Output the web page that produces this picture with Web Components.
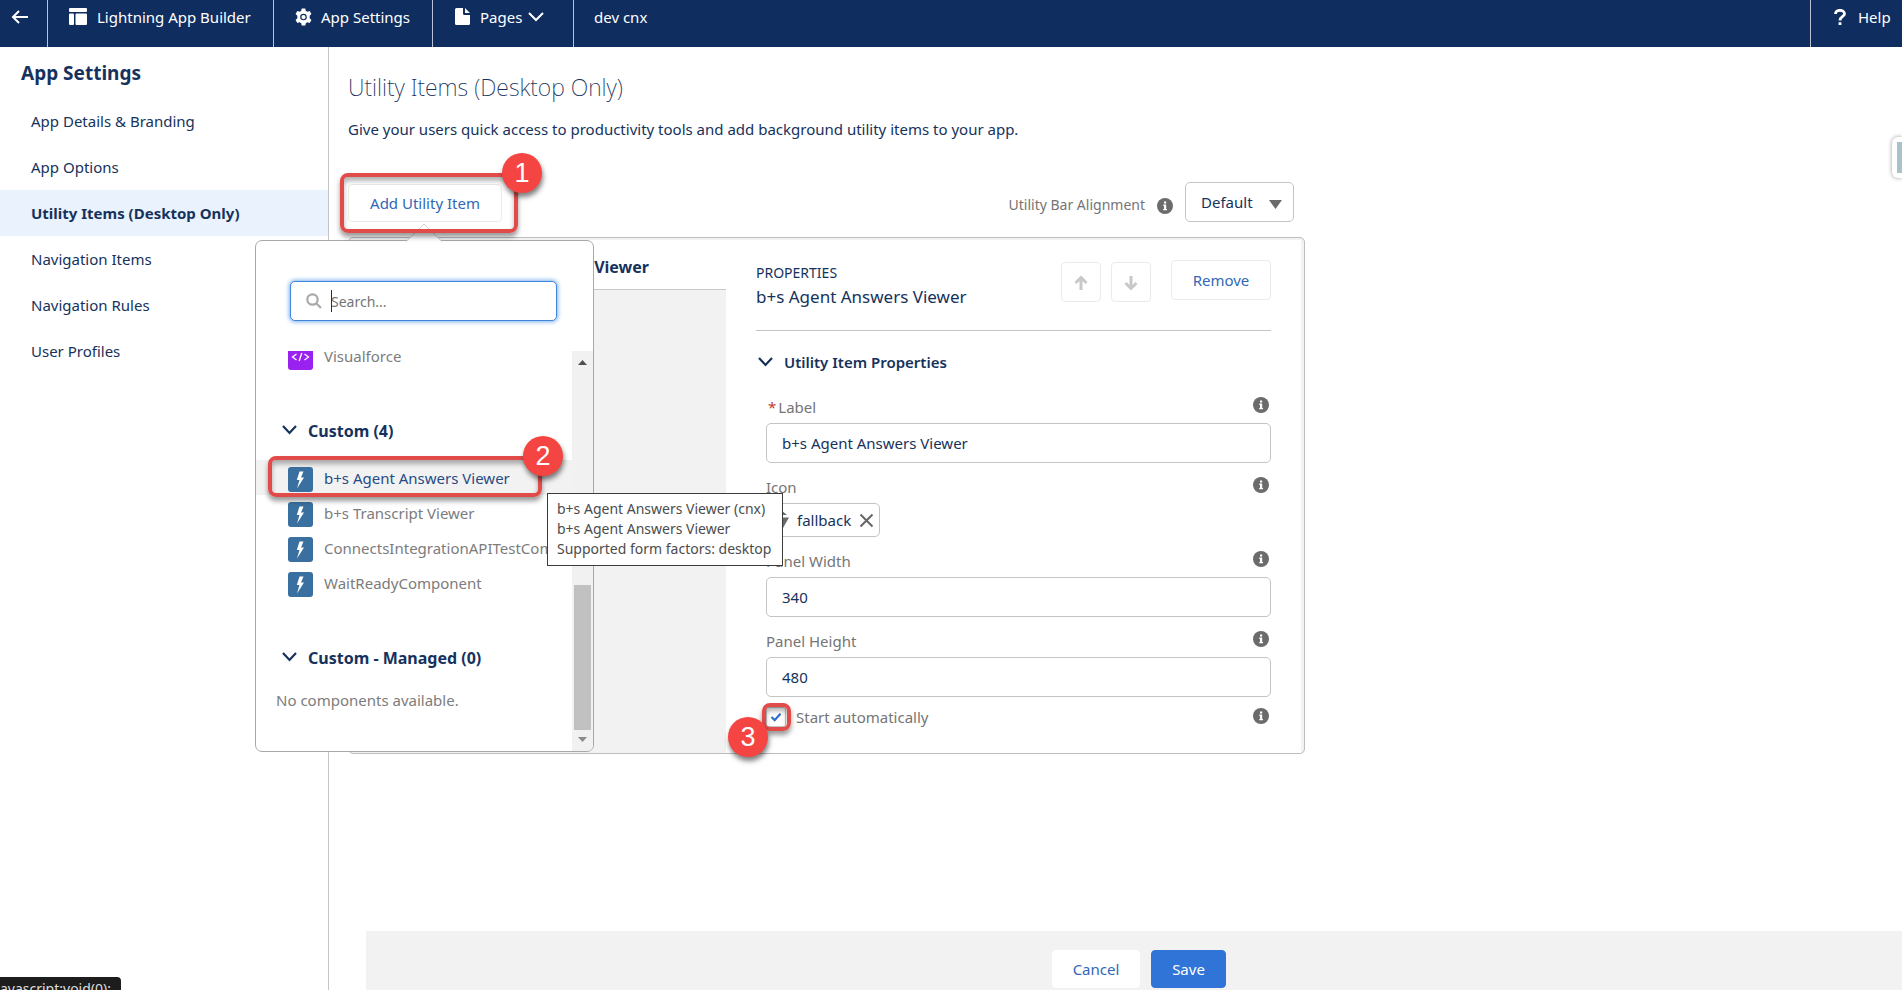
<!DOCTYPE html>
<html lang="en">
<head>
<meta charset="utf-8">
<title>Lightning App Builder</title>
<style>
  html, body { margin: 0; height: 100%; }
  body {
    font-family: "Noto Sans", "Open Sans", sans-serif;
    font-size: 15px; line-height: 24px; color: #16325c; background: #fff; overflow: hidden;
  }
</style>
</head>
<body>
<builder-app></builder-app>

<template id="t-app">
  <style>
    :host { display: grid; grid-template: 47px minmax(0, 1fr) / 329px minmax(0, 1fr); min-height: 100vh; position: relative; overflow: hidden; }
    app-header { grid-column: 1 / -1; }
    .side-tab { position: absolute; right: 0; top: 137px; width: 5px; height: 31px; padding: 5px 0 5px 5px; background: #fff; border-radius: 6px 0 0 6px; box-shadow: 0 0 4px rgba(0,0,0,.4); }
    .side-tab i { display: block; height: 100%; background: #a9c2c9; }
    .status { position: absolute; left: 0; bottom: 0; width: 111px; height: 13px; padding-right: 10px; display: flex; justify-content: flex-end; overflow: hidden; white-space: nowrap; background: #1d1d1d; color: #ddd; font-size: 14px; line-height: 24px; border-radius: 0 4px 0 0; }
  </style>
  <app-header></app-header>
  <settings-nav></settings-nav>
  <utility-page></utility-page>
  <div class="side-tab"><i></i></div>
  <div class="status">javascript:void(0);</div>
</template>

<template id="t-header">
  <style>
    :host { display: grid; grid-template-columns: 48px 226px 159px 141px 1fr 92px; background: #102d5f; color: #fff; line-height: 32px; }
    a, button, span { all: unset; box-sizing: border-box; display: flex; align-items: center; height: 47px; padding-bottom: 14px; border-right: 1px solid #b9c3d3; white-space: nowrap; cursor: pointer; }
    span { border-right: 0; padding-left: 20px; cursor: default; }
    a:last-child { border-right: 0; border-left: 1px solid #b9c3d3; padding-left: 23px; gap: 12px; }
    .back { padding-left: 11px; }
    .b { padding-left: 21px; gap: 10px; }
    .g { padding-left: 21px; gap: 9px; }
    .p { padding-left: 22px; gap: 10px; }
    .p .chev { margin-left: -4px; }
    svg { flex: none; }
  </style>
  <a class="back" href="#back" aria-label="Back"><svg width="18" height="14" viewBox="0 0 18 14" fill="none" stroke="#fff" stroke-width="2"><path d="M17 7H2M8 1L2 7l6 6"/></svg></a>
  <a class="b" href="#builder"><svg width="18" height="17" viewBox="0 0 18 17" fill="#fff"><rect width="18" height="4" rx="1"/><rect y="5.500" width="5" height="11.500" rx="1"/><rect x="6.500" y="5.500" width="11.500" height="11.500" rx="1"/></svg>Lightning App Builder</a>
  <a class="g" href="#settings"><svg width="17" height="18" viewBox="0 0 24 24"><path fill="#fff" fill-rule="evenodd" d="M9.500 0h5l.7 3.300 2.300 1.300 3.200-1 2.500 4.300-2.500 2.300v3.600l2.500 2.300-2.500 4.300-3.200-1-2.300 1.300-.7 3.300h-5l-.7-3.300-2.300-1.300-3.200 1L.8 16.100l2.500-2.300v-3.600L.8 7.900l2.500-4.300 3.200 1 2.300-1.300zM12 7.300a4.700 4.700 0 100 9.400 4.700 4.700 0 000-9.400z"/><circle cx="12" cy="12" r="3" fill="#fff"/></svg>App Settings</a>
  <button class="p" type="button"><svg width="15" height="17" viewBox="0 0 15 17" fill="#fff"><path d="M1.500 0H8v5.500A1.500 1.500 0 009.500 7H15v8.500a1.500 1.500 0 01-1.500 1.500h-12A1.500 1.500 0 010 15.500v-14A1.500 1.500 0 011.500 0zM10 0l5 5h-5z"/></svg>Pages<svg class="chev" width="16" height="10" viewBox="0 0 16 10" fill="none" stroke="#fff" stroke-width="2"><path d="M1 1l7 7 7-7"/></svg></button>
  <span>dev cnx</span>
  <a href="#help"><svg width="12" height="16" viewBox="0 0 12 16" fill="none" stroke="#fff" stroke-width="2.800"><path d="M1.500 5C1.500 2.500 3.500 1.300 6 1.300s4.500 1.400 4.500 3.600C10.500 7.500 6 7.500 6 11.500M6 13.300V16"/></svg>Help</a>
</template>

<template id="t-nav">
  <style>
    :host { display: block; border-right: 1px solid #c4c4c4; padding-top: 13px; }
    h2 { margin: 0 0 12px; padding-left: 21px; font-size: 19px; line-height: 26px; font-weight: 700; }
    a { display: block; padding-left: 31px; line-height: 46px; color: inherit; text-decoration: none; }
    a[aria-current] { background: #eaf2fd; font-weight: 700; }
  </style>
  <h2>App Settings</h2>
  <nav>
    <a href="#details">App Details &amp; Branding</a>
    <a href="#options">App Options</a>
    <a href="#utility" aria-current="page">Utility Items (Desktop Only)</a>
    <a href="#items">Navigation Items</a>
    <a href="#rules">Navigation Rules</a>
    <a href="#profiles">User Profiles</a>
  </nav>
</template>

<template id="t-page">
  <style>
    :host { display: flex; flex-direction: column; min-width: 0; }
    .content { padding: 24px 19px 0; max-width: 957px; }
    h1 { margin: 0; font-size: 23px; line-height: 32px; font-weight: 200; }
    p { margin: 14px 0 41px; }
    .bar { display: flex; align-items: flex-end; height: 40px; margin-bottom: 15px; padding-right: 11px; }
    .add { position: relative; z-index: 2; margin-right: auto; }
    .btn { box-sizing: border-box; height: 38px; padding: 0; width: 154px; font: inherit; color: #3068b5; background: #fff; border: 1px solid #ebebeb; border-radius: 4px; cursor: pointer; }
    utility-picker { position: absolute; left: -93px; top: 56px; z-index: 1; }
    .one { position: absolute; inset: -11px -16px -11px -8px; z-index: 2; pointer-events: none; --x: 162px; --y: -20px; }
    .bar label { font-size: 14px; line-height: 34px; color: #757575; margin-right: 12px; align-self: flex-end; }
    .bar info-dot { margin: 0 12px 8px 0; }
    .select { position: relative; width: 109px; height: 40px; }
    select { appearance: none; box-sizing: border-box; width: 100%; height: 100%; padding: 0 30px 0 15px; font: inherit; color: #16325c; background: #fff; border: 1px solid #c4c4c4; border-radius: 5px; }
    .select svg { position: absolute; right: 12px; top: 18px; pointer-events: none; }
    .panel { display: grid; grid-template-columns: 377px minmax(0, 1fr); border: 1px solid #bdbdbd; border-radius: 5px; background: #f2f2f2; padding: 2px 3px 0 0; }
    .tab { height: 49px; background: #fff; border-bottom: 1px solid #c9c9c9; text-align: right; padding-right: 77px; font-size: 16px; line-height: 54px; font-weight: 700; }
    footer { margin: auto 0 0 37px; height: 40px; padding: 19px 0 0 10px; background: #f2f2f2; display: flex; justify-content: center; gap: 11px; }
    .cancel { width: 88px; border-color: #fff; }
    .save { width: 75px; background: #2f74d6; border-color: #2f74d6; color: #fff; }
    footer .btn { height: 38px; }
  </style>
  <div class="content">
    <h1>Utility Items (Desktop Only)</h1>
    <p>Give your users quick access to productivity tools and add background utility items to your app.</p>
    <div class="bar">
      <div class="add">
        <button class="btn" type="button">Add Utility Item</button>
        <utility-picker></utility-picker>
        <step-callout class="one">1</step-callout>
      </div>
      <label for="align">Utility Bar Alignment</label>
      <info-dot></info-dot>
      <div class="select">
        <select id="align"><option>Default</option><option>Mirrored</option></select>
        <svg width="13" height="9" viewBox="0 0 13 9"><path fill="#6b6b6b" d="M0 0h13L6.500 9z"/></svg>
      </div>
    </div>
    <div class="panel">
      <div><div class="tab">b+s Agent Answers Viewer</div></div>
      <item-properties></item-properties>
    </div>
  </div>
  <footer>
    <button class="btn cancel" type="button">Cancel</button>
    <button class="btn save" type="button">Save</button>
  </footer>
</template>

<template id="t-props">
  <style>
    :host { display: block; background: #fff; padding: 20px 30px 26px 30px; }
    header { display: flex; align-items: flex-start; height: 70px; border-bottom: 1px solid #c4c4c4; }
    .title { margin-right: auto; padding-top: 3px; }
    .title small { display: block; font-size: 14px; line-height: 20px; }
    .title b { display: block; font-size: 17px; line-height: 28px; font-weight: 400; }
    button { box-sizing: border-box; border: 1px solid #ebebeb; border-radius: 4px; background: #fff; height: 40px; padding: 0; font: inherit; color: #3068b5; }
    .arrow { width: 40px; margin: 2px 10px 0 0; }
    .remove { width: 100px; margin-left: 10px; }
    .arrow svg { display: block; margin: 2px auto 0; }
    h3 { display: flex; align-items: center; gap: 11px; margin: 19px 0 22px; padding-left: 2px; font-size: 15px; line-height: 24px; font-weight: 600; }
    .fields { display: grid; gap: 13px; padding-left: 10px; }
    .pill-row { display: grid; gap: 5px; }
    .line { display: flex; justify-content: space-between; align-items: flex-start; line-height: 22px; color: #757575; padding-right: 2px; }
    .line info-dot { margin-top: 1px; }
    .pill { box-sizing: border-box; display: flex; align-items: center; width: 114px; height: 34px; padding-left: 6px; border: 1px solid #c4c4c4; border-radius: 5px; }
    .pill span { margin: 0 8px; }
    .pill button { width: 16px; height: 16px; border: 0; background: none; }
    .pill svg { display: block; flex: none; }
    .check { margin-top: -3px; line-height: 20px; }
    .check > div { display: flex; position: relative; }
    .check label { padding-left: 10px; }
    input { appearance: none; box-sizing: border-box; width: 20px; height: 20px; margin: 0; border: 1px solid #c4c4c4; border-radius: 2px;
      background: #fff url("data:image/svg+xml,%3Csvg xmlns='http://www.w3.org/2000/svg' viewBox='0 0 20 20'%3E%3Cpath d='M5 10l3.500 3.500L15 6.500' fill='none' stroke='%232f6fca' stroke-width='2.500'/%3E%3C/svg%3E") center/18px; }
    step-callout { position: absolute; left: -4px; top: -4px; width: 29px; height: 28px; --x: -34px; --y: 14px; pointer-events: none; }
  </style>
  <header>
    <div class="title"><small>PROPERTIES</small><b>b+s Agent Answers Viewer</b></div>
    <button class="arrow" type="button" aria-label="Move up" disabled><svg width="14" height="16" viewBox="0 0 14 16" fill="none" stroke="#c8c8c8" stroke-width="3"><path d="M7 15V3M1.500 8L7 2.500 12.500 8"/></svg></button>
    <button class="arrow" type="button" aria-label="Move down" disabled><svg width="14" height="16" viewBox="0 0 14 16" fill="none" stroke="#c8c8c8" stroke-width="3"><path d="M7 1v12M1.500 8L7 13.500 12.500 8"/></svg></button>
    <button class="remove" type="button">Remove</button>
  </header>
  <h3><svg width="15" height="10" viewBox="0 0 15 10" fill="none" stroke="#16325c" stroke-width="2.200"><path d="M1 1l6.500 7L14 1"/></svg>Utility Item Properties</h3>
  <div class="fields">
    <prop-field label="Label" value="b+s Agent Answers Viewer" required></prop-field>
    <div class="pill-row">
      <div class="line">Icon<info-dot></info-dot></div>
      <div class="pill">
        <svg width="16" height="20" viewBox="0 0 16 20" fill="#6b6b6b"><path d="M8 0l6 5H2zM1 7.500h15L10 18H6z"/></svg>
        <span>fallback</span>
        <button type="button" aria-label="Remove icon"><svg width="15" height="15" viewBox="0 0 15 15" stroke="#666" stroke-width="2"><path d="M1.500 1.500l12 12M13.500 1.500l-12 12"/></svg></button>
      </div>
    </div>
    <prop-field label="Panel Width" value="340"></prop-field>
    <prop-field label="Panel Height" value="480"></prop-field>
    <div class="line check">
      <div><input type="checkbox" id="auto" checked><label for="auto">Start automatically</label><step-callout>3</step-callout></div>
      <info-dot></info-dot>
    </div>
  </div>
</template>

<template id="t-field">
  <style>
    :host { display: grid; gap: 5px; }
    .line { display: flex; justify-content: space-between; align-items: flex-start; line-height: 22px; color: #757575; padding-right: 2px; }
    .line info-dot { margin-top: 1px; }
    .req { color: #c23934; padding: 0 2px; }
    input { box-sizing: border-box; width: 100%; height: 40px; padding: 0 15px; font: inherit; color: #16325c; background: #fff; border: 1px solid #c4c4c4; border-radius: 5px; }
  </style>
  <div class="line"><label for="f"></label><info-dot></info-dot></div>
  <input id="f" type="text">
</template>

<template id="t-picker">
  <style>
    :host { display: block; box-sizing: border-box; width: 339px; height: 512px; background: #fff; border: 1px solid #a8a8a8; border-radius: 7px; }
    .nub { position: absolute; left: 150px; top: -18px; }
    .search { position: relative; margin: 40px 35px 30px 34px; }
    input { display: block; box-sizing: border-box; width: 267px; height: 40px; padding: 0 12px 0 40px; font: inherit; font-size: 14px; border: 1px solid #3f86dc; border-radius: 5px; outline: 0; box-shadow: 0 0 4px 1px #79b0f0; color: #16325c; }
    input::placeholder { color: #757575; opacity: 1; }
    .search svg { position: absolute; left: 16px; top: 12px; }
    .search::after { content: ""; position: absolute; left: 41px; top: 9px; width: 1px; height: 22px; background: #16325c; }
    .body { display: grid; grid-template-columns: minmax(0, 1fr) 21px; height: 400px; }
    .list { display: flex; flex-direction: column; justify-content: flex-end; overflow: hidden; }
    h4 { display: flex; align-items: center; gap: 11px; margin: 46px 0 17px; padding-left: 26px; font-size: 16px; line-height: 24px; font-weight: 700; }
    h4 svg { margin-top: -3px; }
    .empty { margin: 0 0 37px; padding-left: 20px; line-height: 26px; color: #7c7c7c; padding-bottom: 1px; }
    .scroll { background: #f1f1f1; display: flex; flex-direction: column; align-items: center; padding: 9px 2px; border-radius: 0 0 6px 0; box-sizing: border-box; height: 400px; }
    .thumb { width: 17px; height: 145px; margin: auto 0 7px; background: #c1c1c1; }
    .two { position: absolute; left: 12px; top: 215px; width: 274px; height: 41px; --x: 255px; --y: -20px; }
    .tip { position: absolute; left: 291px; top: 252px; box-sizing: border-box; width: 236px; height: 73px; padding: 5px 9px; background: #fff; border: 1px solid #3c3c3c; color: #4c4c4c; font-size: 14px; line-height: 20px; white-space: pre; z-index: 3; }
  </style>
  <svg class="nub" width="36" height="20" viewBox="0 0 36 20"><path d="M0 19L18 1l18 18v1H0z" fill="#fff"/><path d="M0 18.500L18 1l18 17.500" fill="none" stroke="#cfcfcf"/></svg>
  <div class="search">
    <input type="search" placeholder="Search..." aria-label="Search components">
    <svg width="16" height="16" viewBox="0 0 16 16" fill="none" stroke="#aaa" stroke-width="2.200"><circle cx="6.500" cy="6.500" r="5.200"/><path d="M10.500 10.500L15 15"/></svg>
  </div>
  <div class="body">
    <div class="list">
      <picker-item kind="visualforce">Visualforce</picker-item>
      <h4><svg width="15" height="10" viewBox="0 0 15 10" fill="none" stroke="#16325c" stroke-width="2.200"><path d="M1 1l6.500 7L14 1"/></svg>Custom (4)</h4>
      <picker-item active>b+s Agent Answers Viewer</picker-item>
      <picker-item>b+s Transcript Viewer</picker-item>
      <picker-item>ConnectsIntegrationAPITestComponent</picker-item>
      <picker-item>WaitReadyComponent</picker-item>
      <h4><svg width="15" height="10" viewBox="0 0 15 10" fill="none" stroke="#16325c" stroke-width="2.200"><path d="M1 1l6.500 7L14 1"/></svg>Custom - Managed (0)</h4>
      <p class="empty">No components available.</p>
    </div>
    <div class="scroll">
      <svg width="9" height="5" viewBox="0 0 9 5"><path fill="#505050" d="M0 5h9L4.500 0z"/></svg>
      <div class="thumb"></div>
      <svg width="9" height="5" viewBox="0 0 9 5"><path fill="#8b8b8b" d="M0 0h9L4.500 5z"/></svg>
    </div>
  </div>
  <step-callout class="two">2</step-callout>
  <div class="tip" role="tooltip">b+s Agent Answers Viewer (cnx)
b+s Agent Answers Viewer
Supported form factors: desktop</div>
</template>

<template id="t-item">
  <style>
    :host { display: block; flex: none; }
    a { display: flex; align-items: flex-end; height: 35px; box-sizing: border-box; padding: 0 0 3px 32px; gap: 11px; color: #7c7c7c; text-decoration: none; }
    :host([active]) a { background: #f2f2f2; color: #274b85; }
    svg { flex: none; }
    span { line-height: 28px; overflow: hidden; white-space: nowrap; }
  </style>
  <a href="#add"><svg width="25" height="25" viewBox="0 0 25 25"></svg><span><slot></slot></span></a>
</template>

<template id="t-info">
  <style>:host { display: block; width: 16px; height: 16px; } svg { display: block; }</style>
  <svg width="16" height="16" viewBox="0 0 16 16"><circle cx="8" cy="8" r="8" fill="#6b6b6b"/><path fill="#fff" d="M7 3.500h2.200v2H7zM6.300 6.600H9.200v4.300H10v1.300H6.200v-1.300H7V7.900h-.7z"/></svg>
</template>

<template id="t-callout">
  <style>
    :host { display: block; box-sizing: border-box; border: 4px solid #e14c4a; border-radius: 8px; box-shadow: 0 4px 5px rgba(0,0,0,.4), inset 0 4px 5px rgba(0,0,0,.3); }
    b { position: absolute; left: var(--x); top: var(--y); width: 40px; height: 40px; margin: -4px 0 0 -4px; border-radius: 50%; background: #f54542; color: #fff; text-align: center; font: 27px/40px "Liberation Sans", Arial, sans-serif; box-shadow: 1px 4px 5px rgba(0,0,0,.5); }
  </style>
  <b><slot></slot></b>
</template>

<script>
  class Base extends HTMLElement {
    constructor() {
      super();
      this.attachShadow({ mode: "open" })
        .append(document.getElementById(this.constructor.template).content.cloneNode(true));
    }
  }
  const simple = (name, id) => customElements.define(name, class extends Base { static template = id; });

  simple("info-dot", "t-info");
  simple("step-callout", "t-callout");

  customElements.define("prop-field", class extends Base {
    static template = "t-field";
    connectedCallback() {
      const label = this.shadowRoot.querySelector("label");
      label.textContent = this.getAttribute("label");
      if (this.hasAttribute("required")) {
        const star = document.createElement("span");
        star.className = "req";
        star.textContent = "*";
        label.prepend(star);
      }
      this.shadowRoot.querySelector("input").value = this.getAttribute("value");
    }
  });

  const GLYPHS = {
    visualforce: '<rect width="25" height="25" rx="3" fill="#9a22f0"/><path d="M8.500 9L4.500 12l4 3M16.500 9l4 3-4 3M13.800 8l-2.600 8" fill="none" stroke="#fff" stroke-width="1.300"/>',
    lightning: '<rect width="25" height="25" rx="3" fill="#3a709f"/><path d="M11.500 4.500h4l-2.500 6h3L9 21.500l2.500-8.500H8.800z" fill="#fff"/>'
  };
  customElements.define("picker-item", class extends Base {
    static template = "t-item";
    connectedCallback() {
      this.shadowRoot.querySelector("svg").innerHTML = GLYPHS[this.getAttribute("kind") || "lightning"];
    }
  });

  simple("utility-picker", "t-picker");
  simple("item-properties", "t-props");
  simple("utility-page", "t-page");
  simple("settings-nav", "t-nav");
  simple("app-header", "t-header");
  simple("builder-app", "t-app");
</script>
</body>
</html>
